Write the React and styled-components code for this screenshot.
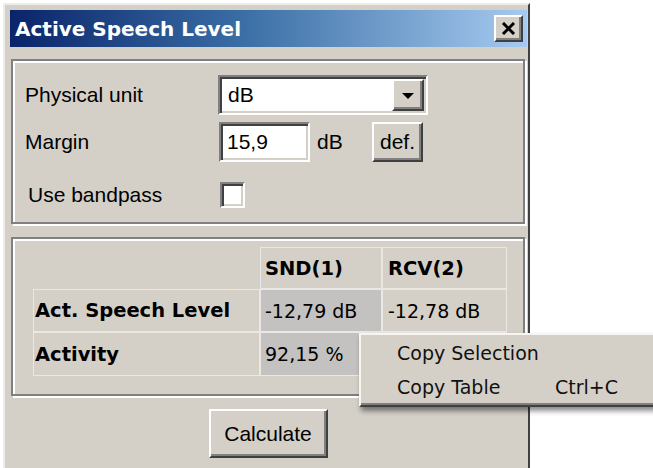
import React from 'react';
import styled, { createGlobalStyle } from 'styled-components';

const GlobalStyle = createGlobalStyle`
  html, body {
    margin: 0;
    padding: 0;
    background: #ffffff;
    overflow: hidden;
  }
`;

const FACE = '#d4d0c8';
const SANS = "'Liberation Sans', Arial, sans-serif";
const TAHOMA = "'DejaVu Sans', Verdana, sans-serif";

const Window = styled.div`
  position: relative;
  box-sizing: border-box;
  width: 527px;
  height: 465px;
  margin: 3px 0 0 3px;
  padding: 5px 1px 0 5px;
  background: ${FACE};
  border-left: 2px solid #eeece8;
  border-top: 2px solid #eeece8;
  border-right: 2px solid #404040;
  font-family: ${SANS};
  font-size: 21px;
  color: #000;
`;

const TitleBar = styled.div`
  display: flex;
  align-items: center;
  justify-content: space-between;
  height: 37px;
  padding: 0 4px 0 5px;
  background: linear-gradient(90deg, #0a246a 0%, #3a6ea5 45%, #a6caf0 100%);
`;

const Title = styled.span`
  font-family: ${TAHOMA};
  font-weight: bold;
  font-size: 20px;
  color: #fff;
  white-space: nowrap;
`;

// classic raised 3D edge used by all push buttons
const raised = `
  border: 2px solid;
  border-color: #ffffff #404040 #404040 #ffffff;
  box-shadow: inset -2px -2px 0 #808080;
  background: ${FACE};
`;

// classic sunken edge for edit fields
const sunken = `
  border: 2px solid;
  border-color: #808080 #ffffff #ffffff #808080;
  box-shadow: inset 2px 2px 0 #404040, inset -2px -2px 0 ${FACE};
`;

const CloseButton = styled.div`
  box-sizing: border-box;
  width: 29px;
  height: 27px;
  display: flex;
  align-items: center;
  justify-content: center;
  ${raised}
`;

const Body = styled.div`
  padding: 12px 2px 0 1px;
`;

const Group = styled.div`
  box-sizing: border-box;
  height: ${(p) => p.$height}px;
  margin-top: ${(p) => p.$gap || 0}px;
  border: 2px solid #808080;
  box-shadow: inset 2px 2px 0 #ffffff, 2px 2px 0 #ffffff;
  padding: ${(p) => p.$pad};
`;

const Row = styled.div`
  display: flex;
  align-items: center;
  height: ${(p) => p.$h}px;
  margin-top: ${(p) => p.$mt || 0}px;
`;

const Label = styled.div`
  box-sizing: border-box;
  width: 194px;
  padding-left: ${(p) => p.$indent || 0}px;
  white-space: nowrap;
`;

const Combo = styled.div`
  box-sizing: border-box;
  display: flex;
  width: 210px;
  height: 40px;
  margin-left: -1px;
  padding: 2px;
  background: #fff;
  ${sunken}
`;

const ComboText = styled.div`
  flex: 1;
  display: flex;
  align-items: center;
  padding-left: 6px;
`;

const DropButton = styled.div`
  box-sizing: border-box;
  width: 32px;
  display: flex;
  align-items: center;
  justify-content: center;
  ${raised}
`;

const Arrow = styled.div`
  width: 0;
  height: 0;
  border-left: 6px solid transparent;
  border-right: 6px solid transparent;
  border-top: 6px solid #000;
  margin-top: 2px;
`;

const Edit = styled.div`
  box-sizing: border-box;
  display: flex;
  align-items: center;
  width: 91px;
  height: 40px;
  padding-left: 6px;
  background: #fff;
  ${sunken}
`;

const Unit = styled.span`
  margin-left: 7px;
  width: 55px;
`;

const Button = styled.div`
  box-sizing: border-box;
  display: flex;
  align-items: center;
  justify-content: center;
  width: ${(p) => p.$w}px;
  height: ${(p) => p.$h}px;
  ${raised}
`;

const CheckBox = styled.div`
  box-sizing: border-box;
  width: 25px;
  height: 26px;
  margin-left: 1px;
  background: #fff;
  ${sunken}
`;

const Grid = styled.div`
  display: grid;
  grid-template-columns: 227px 122px 125px;
  grid-template-rows: 42px 43px 44px;
  font-family: ${TAHOMA};
  font-size: 19px;
`;

const Cell = styled.div`
  display: flex;
  align-items: center;
  padding-left: ${(p) => p.$pl ?? 5}px;
  font-weight: ${(p) => (p.$bold ? 'bold' : 'normal')};
  font-size: ${(p) => (p.$bold ? '19.5px' : '19px')};
  background: ${(p) => (p.$selected ? '#c3c2c0' : 'transparent')};
  box-shadow: ${(p) => (p.$blank ? 'none' : 'inset 0 0 0 1px #ebe8e3')};
  white-space: nowrap;
`;

const Footer = styled.div`
  display: flex;
  justify-content: center;
  margin-top: 13px;
`;

const Menu = styled.div`
  position: absolute;
  left: 354px;
  top: 328px;
  width: 320px;
  box-sizing: border-box;
  padding: 1px 0;
  background: ${FACE};
  border: 2px solid;
  border-color: #f6f5f2 #404040 #404040 #f6f5f2;
  box-shadow: inset -2px -2px 0 #808080, 2px 4px 5px rgba(0, 0, 0, 0.45);
  font-family: ${TAHOMA};
  font-size: 19px;
  color: #111;
`;

const MenuItem = styled.div`
  display: flex;
  align-items: center;
  height: 34px;
  padding-left: 36px;
`;

const ItemText = styled.span`
  width: 158px;
`;

// the RCV activity cell sits under the popup menu, so it is left empty
const cells = [
  { text: '', blank: true },
  { text: 'SND(1)', bold: true },
  { text: 'RCV(2)', bold: true, pl: 6 },
  { text: 'Act. Speech Level', bold: true, pl: 2 },
  { text: '-12,79 dB', selected: true },
  { text: '-12,78 dB', pl: 6 },
  { text: 'Activity', bold: true, pl: 2 },
  { text: '92,15 %', selected: true },
  { text: '', pl: 6 },
];

export default function App() {
  return (
    <>
      <GlobalStyle />
      <Window>
        <TitleBar>
          <Title>Active Speech Level</Title>
          <CloseButton>
            <svg width="15" height="13" viewBox="0 0 15 13">
              <path d="M2 1 L13 12 M13 1 L2 12" stroke="#000" strokeWidth="3" />
            </svg>
          </CloseButton>
        </TitleBar>
        <Body>
          <Group $height={165} $pad="14px 12px">
            <Row $h={40}>
              <Label>Physical unit</Label>
              <Combo>
                <ComboText>dB</ComboText>
                <DropButton>
                  <Arrow />
                </DropButton>
              </Combo>
            </Row>
            <Row $h={40} $mt={7}>
              <Label>Margin</Label>
              <Edit>15,9</Edit>
              <Unit>dB</Unit>
              <Button $w={51} $h={40}>def.</Button>
            </Row>
            <Row $h={26} $mt={20}>
              <Label $indent={3}>Use bandpass</Label>
              <CheckBox />
            </Row>
          </Group>
          <Group $height={159} $gap={13} $pad="8px 0 0 20px">
            <Grid>
              {cells.map((c, i) => (
                <Cell key={i} $bold={c.bold} $selected={c.selected} $blank={c.blank} $pl={c.pl}>
                  {c.text}
                </Cell>
              ))}
            </Grid>
          </Group>
          <Footer>
            <Button $w={119} $h={49}>Calculate</Button>
          </Footer>
        </Body>
        <Menu>
          <MenuItem>
            <ItemText>Copy Selection</ItemText>
          </MenuItem>
          <MenuItem>
            <ItemText>Copy Table</ItemText>
            <span>Ctrl+C</span>
          </MenuItem>
        </Menu>
      </Window>
    </>
  );
}
